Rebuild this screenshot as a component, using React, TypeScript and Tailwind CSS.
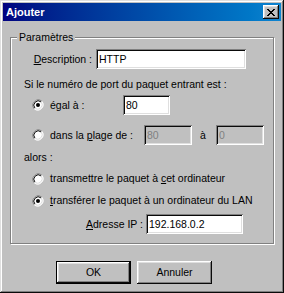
const sunken =
  'shadow-[inset_1px_1px_0_#808080,inset_-1px_-1px_0_#ffffff,inset_2px_2px_0_#0a0a0a,inset_-2px_-2px_0_#dfdfdf]';
const raised =
  'shadow-[inset_-1px_-1px_0_#0a0a0a,inset_1px_1px_0_#ffffff,inset_-2px_-2px_0_#808080,inset_2px_2px_0_#dfdfdf]';

function Radio({ checked }: { checked?: boolean }) {
  return (
    <svg width="12" height="12" viewBox="0 0 12 12" className="shrink-0">
      <circle cx="6" cy="6" r="5" fill="#ffffff" />
      <path d="M2.2 9.8 A5.4 5.4 0 0 1 9.8 2.2" fill="none" stroke="#808080" strokeWidth="1" />
      <path d="M9.8 2.2 A5.4 5.4 0 0 1 2.2 9.8" fill="none" stroke="#ffffff" strokeWidth="1" />
      <path d="M2.9 9.1 A4.4 4.4 0 0 1 9.1 2.9" fill="none" stroke="#0a0a0a" strokeWidth="1" />
      <path d="M9.1 2.9 A4.4 4.4 0 0 1 2.9 9.1" fill="none" stroke="#dfdfdf" strokeWidth="1" />
      {checked && <circle cx="6" cy="6" r="2" fill="#000000" />}
    </svg>
  );
}

function Field({ value, width, disabled }: { value: string; width: string; disabled?: boolean }) {
  return (
    <div
      className={`${width} h-[20px] flex items-center pl-[3px] ${sunken} ${
        disabled ? 'bg-[#c0c0c0] text-[#808080]' : 'bg-white text-black'
      }`}
    >
      {value}
    </div>
  );
}

export default function App() {
  return (
    <div
      className="w-[284px] h-[293px] bg-[#c0c0c0] p-[3px] flex flex-col text-[10.5px] leading-[13px] text-black shadow-[inset_-1px_-1px_0_#0a0a0a,inset_1px_1px_0_#dfdfdf,inset_-2px_-2px_0_#808080,inset_2px_2px_0_#ffffff]"
      style={{ fontFamily: '"Liberation Sans", Arial, sans-serif' }}
    >
      {/* title bar */}
      <div className="h-[18px] flex items-center justify-between pl-[3px] pr-[2px] bg-gradient-to-r from-[#000080] to-[#1084d0]">
        <span className="text-white font-bold text-[11px]">Ajouter</span>
        <div className={`w-[16px] h-[14px] bg-[#c0c0c0] flex items-center justify-center ${raised}`}>
          <svg width="8" height="7" viewBox="0 0 8 7" shapeRendering="crispEdges">
            <path
              d="M0 0h2v1h-2zM6 0h2v1h-2zM1 1h2v1h-2zM5 1h2v1h-2zM2 2h4v1h-4zM3 3h2v1h-2zM2 4h4v1h-4zM1 5h2v1h-2zM5 5h2v1h-2zM0 6h2v1h-2zM6 6h2v1h-2z"
              fill="#000"
            />
          </svg>
        </div>
      </div>

      {/* group box */}
      <div className="relative ml-[7px] mt-[16px] w-[264px] border border-[#808080] shadow-[inset_1px_1px_0_#ffffff,1px_1px_0_#ffffff] pb-[9px] flex flex-col">
        <span className="absolute -top-[7px] left-[6px] px-[2px] bg-[#c0c0c0]">Paramètres</span>

        <div className="mt-[11px] flex items-center">
          <span className="w-[81px] text-right">
            <u>D</u>escription :
          </span>
          <div className="ml-[4px]">
            <Field value="HTTP" width="w-[150px]" />
          </div>
        </div>

        <div className="mt-[9px] pl-[13px] h-[13px]">Si le numéro de port du paquet entrant est :</div>

        <div className="mt-[4px] flex items-center pl-[21px]">
          <Radio checked />
          <span className="ml-[6px] w-[73px]">égal à :</span>
          <Field value="80" width="w-[47px]" />
        </div>

        <div className="mt-[10px] flex items-center pl-[21px]">
          <Radio />
          <span className="ml-[6px] w-[94px]">
            dans la <u>p</u>lage de :
          </span>
          <Field value="80" width="w-[48px]" disabled />
          <span className="ml-[8px] w-[16px]">à</span>
          <Field value="0" width="w-[48px]" disabled />
        </div>

        <div className="mt-[6px] pl-[13px] h-[13px]">alors :</div>

        <div className="mt-[8px] h-[13px] flex items-center pl-[21px]">
          <Radio />
          <span className="ml-[6px]">
            transmettre le paquet à <u>c</u>et ordinateur
          </span>
        </div>

        <div className="mt-[9px] h-[13px] flex items-center pl-[21px]">
          <Radio checked />
          <span className="ml-[6px]">
            <u>t</u>ransférer le paquet à un ordinateur du LAN
          </span>
        </div>

        <div className="mt-[7px] flex items-center">
          <span className="w-[132px] text-right">
            <u>A</u>dresse IP :
          </span>
          <div className="ml-[3px]">
            <Field value="192.168.0.2" width="w-[97px]" />
          </div>
        </div>
      </div>

      {/* buttons */}
      <div className="mt-[17px] flex pl-[53px] gap-[6px]">
        <div className="w-[75px] h-[23px] border border-black">
          <div className={`w-full h-full flex items-center justify-center ${raised}`}>OK</div>
        </div>
        <div className={`w-[75px] h-[23px] flex items-center justify-center ${raised}`}>Annuler</div>
      </div>
    </div>
  );
}
